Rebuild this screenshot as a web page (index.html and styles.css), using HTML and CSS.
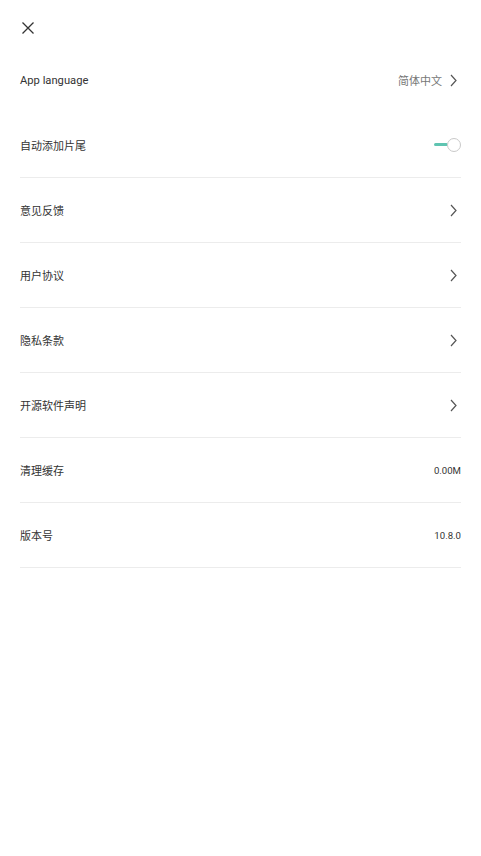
FILE: index.html
```html
<!DOCTYPE html>
<html lang="zh-CN">
<head>
  <meta charset="UTF-8">
  <meta name="viewport" content="width=device-width, initial-scale=1.0">
  <title>设置</title>
  <link rel="stylesheet" href="styles.css">
</head>
<body>
  <div class="page">
    <div class="header">
      <svg class="close-icon" width="12" height="12" viewBox="0 0 12 12">
        <path d="M0.5 0.5 L11.5 11.5 M11.5 0.5 L0.5 11.5" stroke="#333" stroke-width="1.3" fill="none"/>
      </svg>
    </div>

    <div class="settings">
      <div class="row no-line">
        <span class="label latin">App language</span>
        <span class="value">
          <span class="value-gray">简体中文</span>
          <svg class="chevron" width="7" height="13" viewBox="0 0 7 13">
            <path d="M1 1 L6 6.5 L1 12" stroke="#555" stroke-width="1.2" fill="none"/>
          </svg>
        </span>
      </div>

      <div class="row switch-row">
        <span class="label">自动添加片尾</span>
        <span class="toggle">
          <span class="toggle-track"></span>
          <span class="toggle-knob"></span>
        </span>
      </div>

      <div class="row">
        <span class="label">意见反馈</span>
        <svg class="chevron" width="7" height="13" viewBox="0 0 7 13">
          <path d="M1 1 L6 6.5 L1 12" stroke="#555" stroke-width="1.2" fill="none"/>
        </svg>
      </div>

      <div class="row">
        <span class="label">用户协议</span>
        <svg class="chevron" width="7" height="13" viewBox="0 0 7 13">
          <path d="M1 1 L6 6.5 L1 12" stroke="#555" stroke-width="1.2" fill="none"/>
        </svg>
      </div>

      <div class="row">
        <span class="label">隐私条款</span>
        <svg class="chevron" width="7" height="13" viewBox="0 0 7 13">
          <path d="M1 1 L6 6.5 L1 12" stroke="#555" stroke-width="1.2" fill="none"/>
        </svg>
      </div>

      <div class="row">
        <span class="label">开源软件声明</span>
        <svg class="chevron" width="7" height="13" viewBox="0 0 7 13">
          <path d="M1 1 L6 6.5 L1 12" stroke="#555" stroke-width="1.2" fill="none"/>
        </svg>
      </div>

      <div class="row">
        <span class="label">清理缓存</span>
        <span class="value-small">0.00M</span>
      </div>

      <div class="row">
        <span class="label">版本号</span>
        <span class="value-small">10.8.0</span>
      </div>
    </div>
  </div>
</body>
</html>
```

FILE: styles.css
```css
body {
  margin: 0;
  background: #fff;
  font-family: Roboto, "Noto Sans CJK SC", sans-serif;
  color: #333;
}

.page {
  width: 481px;
}

.header {
  height: 48px;
  box-sizing: border-box;
  padding: 22px 0 0 22px;
}

.close-icon {
  display: block;
}

.settings {
  padding: 0 20px;
}

.row {
  height: 64px;
  display: flex;
  align-items: center;
  justify-content: space-between;
  border-bottom: 1px solid #ececec;
}

.row.no-line {
  border-bottom: none;
}

.row.switch-row {
  height: 65px;
}

.label {
  font-size: 11px;
  color: #333;
}

.label.latin {
  font-size: 11.2px;
}

.value {
  display: flex;
  align-items: center;
  gap: 8px;
}

.value-gray {
  font-size: 11px;
  color: #777;
}

.chevron {
  display: block;
  margin-right: 4px;
}

.value-small {
  font-size: 9.6px;
  color: #333;
}

.toggle {
  display: flex;
  align-items: center;
}

.toggle-track {
  width: 14px;
  height: 3px;
  background: #5fc4b1;
  border-radius: 2px;
}

.toggle-knob {
  width: 12px;
  height: 12px;
  border: 1px solid #c9c9c9;
  border-radius: 50%;
  background: #fff;
  margin-left: -1px;
}
```
